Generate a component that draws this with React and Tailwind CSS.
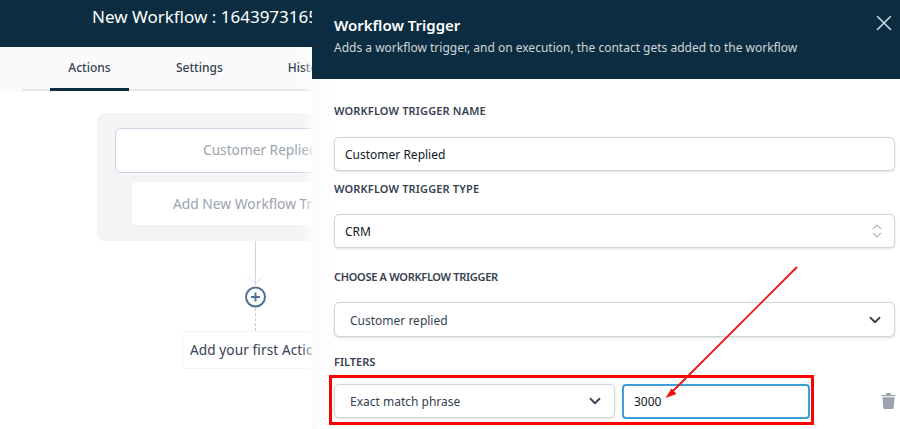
import React from "react";
import { ChevronDown, ChevronsUpDown, X } from "lucide-react";

function Label({ children, className = "" }) {
  return <div className={"text-[11px] leading-4 font-semibold uppercase text-[#374151] " + className}>{children}</div>;
}

function Field({ children, right, className = "", text = "text-[#111827] pl-[10px]", inner = "pt-[1px]" }) {
  return (
    <div className={"flex shrink-0 items-center justify-between rounded-[5px] border border-[#d1d5db] bg-white shadow-sm text-[12px] " + text + " " + className}>
      <span className={inner}>{children}</span>
      {right}
    </div>
  );
}

export default function App() {
  return (
    <div className="relative w-[900px] h-[429px] overflow-hidden bg-white font-['Noto_Sans','Open_Sans',sans-serif]">
      {/* Page behind the panel */}
      <header className="h-[47px] bg-[#0c2d41] pl-[92px] pt-[5px] text-[17px] leading-6 text-white whitespace-nowrap">
        New Workflow : 1643973165123
      </header>
      <nav className="h-[45px] bg-[#f9fafb] pl-[22px]">
        <div className="flex h-[44px] border-b-2 border-[#e5e7eb] pl-[28px] text-[12px] text-[#374151]">
          <div className="w-[79px] h-[44px] border-b-[3px] border-[#0c2d41] pt-[12px] text-center font-medium">Actions</div>
          <div className="pl-[47px] pt-[12px] font-medium">Settings</div>
          <div className="pl-[65px] pt-[12px] font-medium">History</div>
        </div>
      </nav>
      <main className="pl-[97px] pt-[21px]">
        <div className="w-[316px] h-[128px] rounded-lg bg-[#f3f4f6] pt-[15px] pl-[18px]">
          <div className="w-[298px] h-[45px] rounded-md border border-[#cbd5e1] bg-white pl-[87px] pt-[11px] text-[13.7px] leading-5 text-[#9ca3af] whitespace-nowrap">
            Customer Replied
          </div>
          <div className="ml-[16px] mt-[8px] w-[282px] h-[45px] rounded-md border border-dotted border-[#e5e7eb] bg-white pl-[41px] pt-[12px] text-[13.8px] leading-5 text-[#9ca3af] whitespace-nowrap">
            Add New Workflow Trigger
          </div>
        </div>
        <svg width="40" height="92" viewBox="0 0 40 92" className="ml-[138px] block">
          <path d="M20.5 0V44" stroke="#d1d5db" strokeWidth="1" fill="none" />
          <path d="M13 35.5L20.5 43L28 35.5" stroke="#d9dde3" strokeWidth="1" fill="none" />
          <circle cx="20.5" cy="56" r="9.5" fill="#fff" stroke="#4f6f96" strokeWidth="2" />
          <path d="M16 56H25M20.5 51.5V60.5" stroke="#4f6f96" strokeWidth="2" fill="none" />
          <path d="M20.5 67V90" stroke="#c9ced6" strokeWidth="1" strokeDasharray="3 2" fill="none" />
        </svg>
        <div className="-mt-[2px] ml-[85px] w-[200px] h-[38px] rounded border border-dotted border-[#e5e7eb] pl-[7px] pt-[8px] text-[13.6px] leading-5 tracking-[0.1px] text-[#374151] whitespace-nowrap">
          Add your first Action
        </div>
      </main>

      {/* Soft fade at the panel's edge, below the dark header */}
      <div className="absolute left-[302px] top-[47px] w-[10px] h-[382px] bg-gradient-to-r from-transparent to-white/70" />

      {/* Slide-over panel */}
      <aside className="absolute left-[312px] top-0 w-[588px] h-[429px] bg-white">
        <div className="absolute left-0 top-[79px] w-[20px] h-[350px] bg-gradient-to-r from-[#f9f9f9] to-white" />
        <div className="relative h-[79px] bg-[#0c2d41] pl-[22px] pt-[14px]">
          <div className="text-[15px] leading-[22px] font-semibold text-white">Workflow Trigger</div>
          <div className="mt-[3px] text-[12px] leading-[18px] text-[#d1d5db]">
            Adds a workflow trigger, and on execution, the contact gets added to the workflow
          </div>
          <X className="absolute right-[3px] top-[10px] text-[#cbd5e1]" size={26} strokeWidth={1.4} />
        </div>
        <div className="relative pl-[22px] pr-[5px]">
          <Label className="pt-[24px] tracking-[0.15px]">Workflow Trigger Name</Label>
          <Field className="mt-[18px] h-[34px]">Customer Replied</Field>
          <Label className="mt-[10px] tracking-[0.15px]">Workflow Trigger Type</Label>
          <Field className="mt-[17px] h-[34px] pr-[8px]" right={<ChevronsUpDown size={18} strokeWidth={1.4} className="text-[#9ca3af]" />}>CRM</Field>
          <Label className="mt-[21px] tracking-[-0.3px]">Choose a workflow trigger</Label>
          <Field className="mt-[17px] h-[35px] pr-[10px]" text="text-[#374151] pl-[15px]" inner="pt-[2px]" right={<ChevronDown size={18} strokeWidth={2.4} className="text-[#374151]" />}>Customer replied</Field>
          <Label className="mt-[17px]">Filters</Label>
          <div className="mt-[14px] flex items-start">
            <Field className="w-[281px] h-[34px] pr-[10px]" text="text-[#374151] pl-[15px]" right={<ChevronDown size={18} strokeWidth={2.4} className="text-[#374151]" />}>Exact match phrase</Field>
            <div className="ml-[7px] flex shrink-0 items-center w-[188px] h-[35px] rounded-[4px] border-2 border-[#3b9fd8] pl-[10px] text-[12px] text-[#111827]">3000</div>
            <svg width="15" height="17" viewBox="0 0 16 18" className="ml-[71px] mt-[8px] shrink-0">
              <path d="M0.5 3H15.5V4.5H0.5ZM5 3L6 1H10L11 3ZM1.5 5.5H14.5L13.5 17A1 1 0 0 1 12.5 18H3.5A1 1 0 0 1 2.5 17Z" fill="#9ca3af" />
            </svg>
          </div>
        </div>
      </aside>

      {/* Annotation drawn over the screenshot */}
      <div className="absolute left-[329px] top-[375px] w-[485px] h-[50px] border-[3px] border-[#ff0000]" />
      <svg className="absolute left-0 top-0 pointer-events-none" width="900" height="429" viewBox="0 0 900 429">
        <path d="M797 267L673 391" stroke="#f01010" strokeWidth="1.8" fill="none" />
        <path d="M665.5 398L671.5 388.5L676.5 394Z" fill="#f01010" />
      </svg>
    </div>
  );
}
